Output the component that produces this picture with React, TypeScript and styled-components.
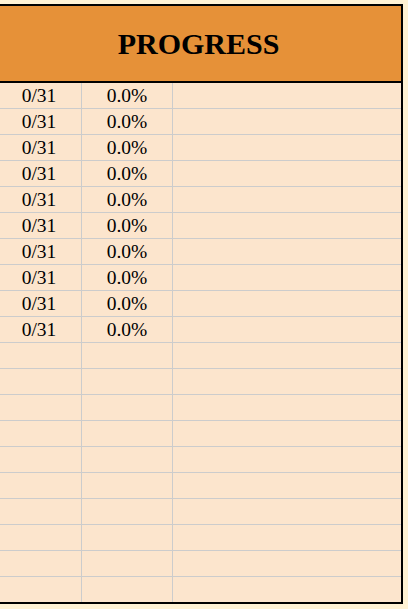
import React from 'react';
import styled, { createGlobalStyle } from 'styled-components';

const rows = Array.from({ length: 20 }, (_, i) =>
  i < 10 ? { done: '0/31', pct: '0.0%' } : { done: '', pct: '' }
);

const GlobalStyle = createGlobalStyle`
  html, body {
    margin: 0;
    padding: 0;
    background: #fff2d4;
  }
  body {
    font-family: "Liberation Serif", "Times New Roman", serif;
    overflow: hidden;
  }
`;

const Page = styled.div`
  padding-top: 4px;
  height: 609px;
  box-sizing: border-box;
`;

const Sheet = styled.div`
  margin-left: -2px;
  width: 405px;
  box-sizing: border-box;
  border: 2px solid #000;
  background: #fce5cd;
`;

const Header = styled.div`
  height: 75px;
  background: #e69138;
  border-bottom: 2px solid #000;
  display: flex;
  align-items: center;
  justify-content: center;
  font-size: 30px;
  font-weight: 700;
  color: #000;
  padding-right: 4px;
`;

const Grid = styled.div`
  display: grid;
  grid-template-columns: 82px 91px 1fr;
`;

const Cell = styled.div<{ $last?: boolean; $lastRow?: boolean; $shift?: number }>`
  height: ${p => (p.$lastRow ? '25px' : '26px')};
  box-sizing: border-box;
  border-bottom: ${p => (p.$lastRow ? 'none' : '1px solid #cccccc')};
  border-right: ${p => (p.$last ? 'none' : '1px solid #cccccc')};
  padding-right: ${p => p.$shift ?? 0}px;
  display: flex;
  align-items: center;
  justify-content: center;
  font-size: 19.5px;
  color: #000;
`;

export default function App() {
  return (
    <Page>
      <GlobalStyle />
      <Sheet>
        <Header>PROGRESS</Header>
        <Grid>
          {rows.map((r, i) => {
            const lastRow = i === rows.length - 1;
            return (
              <React.Fragment key={i}>
                <Cell $lastRow={lastRow} $shift={3}>{r.done}</Cell>
                <Cell $lastRow={lastRow}>{r.pct}</Cell>
                <Cell $last $lastRow={lastRow} />
              </React.Fragment>
            );
          })}
        </Grid>
      </Sheet>
    </Page>
  );
}
